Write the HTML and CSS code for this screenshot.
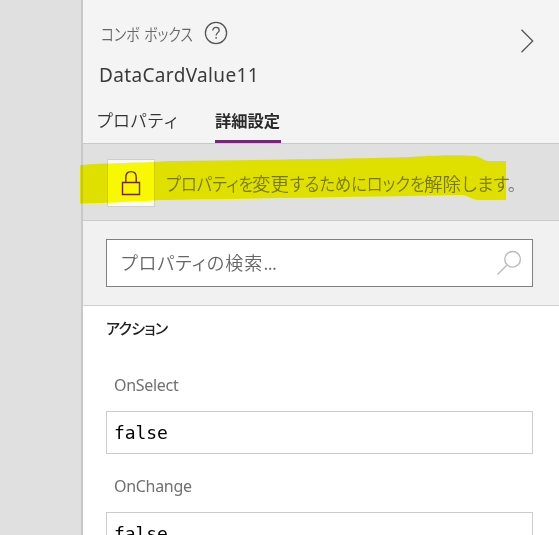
FILE: index.html
```html
<!DOCTYPE html>
<html lang="ja">
<head>
<meta charset="utf-8">
<title>DataCardValue11</title>
<link rel="stylesheet" href="styles.css">
</head>
<body>
<main class="panel">
  <header class="header">
    <div class="heading">
      <span class="type">コンボ ボックス</span>
      <svg class="help" viewBox="0 0 24 24"><circle cx="12" cy="12" r="10.6"/><path d="M8.8 9.4C8.8 7.4 10.1 6.4 12 6.4s3.2 1.1 3.2 2.8c0 2.3-3.1 2.6-3.1 5.3"/><path d="M12.1 16v1.8"/></svg>
      <svg class="chevron" viewBox="0 0 14 26"><path d="M1.500 1.800 12.700 13 1.500 24.200"/></svg>
    </div>
    <h1 class="name">DataCardValue11</h1>
    <nav class="tabs">
      <span class="tab">プロパティ</span>
      <span class="tab active">詳細設定</span>
    </nav>
  </header>
  <section class="lockbar">
    <span class="lock"><svg viewBox="0 0 20 26"><path d="M1.5 12.5h17v12h-17zM4.8 12.5V7.3c0-3.5 2.2-5.7 5.2-5.7s5.2 2.2 5.2 5.7v5.2"/></svg></span>
    <span class="message"><span class="kana first">プロパティを</span><span class="kanji">変更</span><span class="kana middle">するためにロックを</span><span class="kanji">解除</span><span class="kana last">します。</span></span>
    <svg class="marker" viewBox="80 155 428 50"><path d="M80 165C103 163 140 163 170 161C245 160 340 159 410 157C440 155 464 155 475 156C482 157 483 161 489 161H506V200H478C470 199 468 195 461 195C350 197 220 199 160 200C130 202 106 203 80 203.500Z"/></svg>
  </section>
  <section class="search-area">
    <div class="search"><span>プロパティの検索<span class="dots">...</span></span><svg viewBox="0 0 26 26"><circle cx="16.600" cy="9.300" r="7.800"/><path d="M11 15 1.500 24.500"/></svg></div>
  </section>
  <section class="properties">
    <h2 class="group">アクション</h2>
    <div class="label">OnSelect</div>
    <div class="field">false</div>
    <div class="label">OnChange</div>
    <div class="field">false</div>
  </section>
</main>
</body>
</html>
```
FILE: styles.css
```css
* { box-sizing: border-box; }
body {
  margin: 0;
  height: 535px;
  overflow: hidden;
  background: #e0e0e0;
  font-family: "Open Sans", "Noto Sans CJK JP", sans-serif;
}
svg { fill: none; display: block; }
.panel {
  margin-left: 81px;
  height: 535px;
  border-left: 2px solid #c8c8c8;
  background: #fff;
}
.header {
  height: 144px;
  padding-top: 20px;
  background: #f4f4f4;
  border-bottom: 1px solid #c8c8c8;
}
.heading {
  height: 40px;
  display: flex;
  align-items: flex-start;
  padding: 0 25px 0 18px;
}
.type {
  width: 103px;
  font: 350 17px/28px "Noto Sans CJK JP", sans-serif;
  font-feature-settings: "palt";
  word-spacing: 2px;
  white-space: nowrap;
  transform: scaleX(.81);
  transform-origin: left;
  color: #666;
}
.help { width: 24px; height: 24px; margin-top: 1px; stroke: #555; stroke-width: 1.3; }
.chevron { width: 14px; height: 26px; margin: 8px 0 0 auto; stroke: #555; stroke-width: 1.3; }
.name {
  margin: 0 0 0 16px;
  height: 30px;
  font: 400 19px/31px "Noto Sans", sans-serif;
  letter-spacing: .35px;
  color: #3a3a3a;
}
.tabs { height: 53px; display: flex; padding-left: 13px; gap: 38px; }
.tab {
  width: 81px;
  font: 350 17px/60px "Noto Sans CJK JP", sans-serif;
  white-space: nowrap;
  color: #333;
}
.tab.active {
  width: 66px;
  font-size: 16.3px;
  font-weight: 700;
  color: #2a2a2a;
  border-bottom: 3px solid #742774;
}
.lockbar {
  position: relative;
  height: 77px;
  display: flex;
  align-items: center;
  padding: 1px 0 0 24px;
  background: #e0e0e0;
  border-bottom: 1px solid #ccc;
}
.lock {
  width: 48px;
  height: 48px;
  display: grid;
  place-items: center;
  background: #f8f8f8;
  border: 1px solid #cfcfcf;
}
.lock svg { width: 20px; height: 26px; stroke: #702860; stroke-width: 1.4; }
.message {
  display: flex;
  margin-left: 11px;
  font: 350 18.5px/30px "Noto Sans CJK JP", sans-serif;
  font-feature-settings: "palt";
  white-space: nowrap;
  color: #777;
}
.kana { transform: scaleX(.88); transform-origin: left; }
.kanji { width: 38px; }
.first { width: 86px; }
.middle { width: 134px; }
.last { width: 54px; transform: scaleX(.96); }
.marker {
  position: absolute;
  left: -3px;
  top: 11px;
  width: 428px;
  height: 50px;
  fill: #ff0;
  mix-blend-mode: multiply;
}
.search-area {
  height: 85px;
  padding: 18px 26px 0 23px;
  background: #f1f1f1;
  border-bottom: 1px solid #d0d0d0;
}
.search {
  height: 48px;
  display: flex;
  align-items: center;
  justify-content: space-between;
  padding: 0 10px 2px 14px;
  background: #fff;
  border: 1px solid #808080;
  font: 350 18px/30px "Noto Sans CJK JP", sans-serif;
  color: #666;
}
.search span { font-feature-settings: "palt"; letter-spacing: 1.1px; }
.search .dots { letter-spacing: -.5px; }
.search svg { width: 26px; height: 26px; margin-top: 2px; stroke: #bbb; stroke-width: 1.4; }
.properties { padding: 0 26px 0 23px; }
.group {
  margin: 0;
  height: 45px;
  font: 500 15px/44px "Noto Sans CJK JP", sans-serif;
  font-feature-settings: "palt";
  letter-spacing: -.7px;
  color: #222;
}
.label {
  height: 58px;
  padding-left: 8px;
  font: 400 16px/64px "Noto Sans", sans-serif;
  letter-spacing: -.3px;
  color: #707070;
}
.group + .label { height: 60px; line-height: 68px; }
.field {
  height: 43px;
  padding-left: 7px;
  border: 1px solid #ccc;
  font: 400 18px/41px "DejaVu Sans Mono", monospace;
  letter-spacing: -.1px;
  color: #000;
}
```
